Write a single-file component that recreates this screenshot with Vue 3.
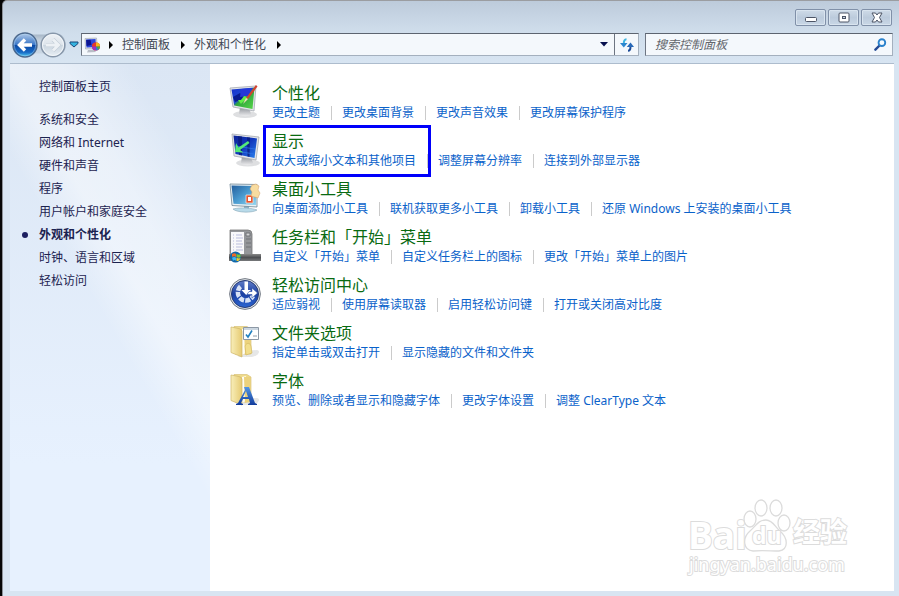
<script setup>
const navLinks = [
  { text: '系统和安全' },
  { text: '网络和 Internet' },
  { text: '硬件和声音' },
  { text: '程序' },
  { text: '用户帐户和家庭安全' },
  { text: '外观和个性化', active: true },
  { text: '时钟、语言和区域' },
  { text: '轻松访问' },
]
const categories = [
  { icon: 'personalize', title: '个性化', links: ['更改主题', '更改桌面背景', '更改声音效果', '更改屏幕保护程序'] },
  { icon: 'display', title: '显示', marked: true, links: ['放大或缩小文本和其他项目', '调整屏幕分辨率', '连接到外部显示器'] },
  { icon: 'gadgets', title: '桌面小工具', links: ['向桌面添加小工具', '联机获取更多小工具', '卸载小工具', '还原 Windows 上安装的桌面小工具'] },
  { icon: 'taskbar', title: '任务栏和「开始」菜单', links: ['自定义「开始」菜单', '自定义任务栏上的图标', '更改「开始」菜单上的图片'] },
  { icon: 'ease', title: '轻松访问中心', links: ['适应弱视', '使用屏幕读取器', '启用轻松访问键', '打开或关闭高对比度'] },
  { icon: 'folder', title: '文件夹选项', links: ['指定单击或双击打开', '显示隐藏的文件和文件夹'] },
  { icon: 'fonts', title: '字体', links: ['预览、删除或者显示和隐藏字体', '更改字体设置', '调整 ClearType 文本'] },
]
</script>

<template>
  <div class="desktop">
    <div class="window">
      <header class="frame-top">
        <div class="captions">
          <button type="button" aria-label="最小化">
            <svg width="12" height="11" viewBox="0 0 12 11"><rect x=".5" y="5.500" width="11" height="4" rx="1" fill="#fff" stroke="#4d5566" /></svg>
          </button>
          <button type="button" aria-label="最大化">
            <svg width="12" height="11" viewBox="0 0 12 11"><rect x="1" y="1" width="10" height="9" rx="1" fill="#fff" stroke="#4d5566" /><rect x="4.500" y="4.500" width="3" height="2" fill="#c8d4e2" stroke="#4d5566" /></svg>
          </button>
          <button type="button" aria-label="关闭">
            <svg width="12" height="11" viewBox="0 0 12 11"><path d="M1 1h3.500L6 3l1.500-2H11L8.500 5.500 11 10H7.500L6 8l-1.500 2H1l2.500-4.500z" fill="#fff" stroke="#4d5566" stroke-linejoin="round" /></svg>
          </button>
        </div>

        <div class="navrow">
          <div class="travel">
            <div class="pair">
              <button type="button" aria-label="后退">
                <svg width="26" height="26" viewBox="0 0 26 26">
                  <defs>
                    <linearGradient id="backBlue" x1="0" y1="0" x2="0" y2="1">
                      <stop offset="0" stop-color="#b4cbe8" /><stop offset=".48" stop-color="#3c78c8" /><stop offset=".52" stop-color="#0c4aa6" /><stop offset=".8" stop-color="#1769c4" /><stop offset="1" stop-color="#4fd0f6" />
                    </linearGradient>
                  </defs>
                  <circle cx="13" cy="13" r="12" fill="url(#backBlue)" stroke="#4b688d" stroke-width="1.300" />
                  <circle cx="13" cy="13" r="10.800" fill="none" stroke="#b6d9f5" stroke-opacity=".45" />
                  <path d="M13 7.500 7.500 13l5.500 5.500M8 13h12" fill="none" stroke="#fff" stroke-width="3.400" />
                </svg>
              </button>
              <button type="button" aria-label="前进">
                <svg width="26" height="26" viewBox="0 0 26 26">
                  <defs>
                    <linearGradient id="forwardGray" x1="0" y1="0" x2="0" y2="1">
                      <stop offset="0" stop-color="#eef2f6" /><stop offset=".5" stop-color="#dde4eb" /><stop offset=".52" stop-color="#cbd6e0" /><stop offset="1" stop-color="#e8eff5" />
                    </linearGradient>
                  </defs>
                  <circle cx="13" cy="13" r="11.800" fill="url(#forwardGray)" stroke="#8797aa" stroke-width="1.500" />
                  <circle cx="13" cy="13" r="10.500" fill="none" stroke="#f2f6fa" />
                  <path d="m13 7.500 5.500 5.500-5.500 5.500M18 13H6" fill="none" stroke="#c0cad5" stroke-width="4" />
                  <path d="m13 7.500 5.500 5.500-5.500 5.500M18 13H6" fill="none" stroke="#edf1f5" stroke-width="3" />
                </svg>
              </button>
            </div>
            <button type="button" class="recent" aria-label="最近的页面">
              <svg width="10" height="7" viewBox="0 0 10 7"><path d="M1 1h8v1.500L5 6 1 2.500z" fill="#35b3df" stroke="#1b4778" stroke-linejoin="round" /></svg>
            </button>
          </div>

          <div class="address">
            <svg class="place" width="17" height="16" viewBox="0 0 17 16">
              <path d="M1 1.500 12.500 1l1 10.500-12 .5z" fill="#d7dbe2" stroke="#9aa3b0" stroke-width=".6" />
              <path d="m2 2.500 9.500-.4.5 8-9.500.5z" fill="#2c46dc" />
              <path d="m2.200 3 4.300-.3 1 5.300-5 1z" fill="#0d1590" />
              <path d="m4 13 6-.5 2 2.500-9 .5z" fill="#b9bec7" />
              <circle cx="12" cy="9.500" r="4" fill="#e43326" /><path d="M12 9.500 8 9a4 4 0 0 1 4-3.500z" fill="#e4382b" /><path d="M12 9.500V5.500a4 4 0 0 1 4 4z" fill="#f3b81c" /><path d="M12 9.500H8a4 4 0 0 0 4 4z" fill="#9a33c0" /><path d="M12 9.500h4a4 4 0 0 1-1.500 3z" fill="#39b54a" /><path d="M12 9.500 14.500 12.500a4 4 0 0 1-2.500 1z" fill="#2a7ddd" />
            </svg>
            <svg class="chev" width="6" height="8" viewBox="0 0 6 8"><path d="M1 0v8l4-4z" /></svg>
            <a href="#">控制面板</a>
            <svg class="chev" width="6" height="8" viewBox="0 0 6 8"><path d="M1 0v8l4-4z" /></svg>
            <a href="#">外观和个性化</a>
            <svg class="chev" width="6" height="8" viewBox="0 0 6 8"><path d="M1 0v8l4-4z" /></svg>
            <button type="button" class="history" aria-label="以前的位置">
              <svg width="8" height="5" viewBox="0 0 8 5"><path d="M0 0h8L4 4.500z" fill="#07104e" /></svg>
            </button>
            <button type="button" class="refresh" aria-label="刷新">
              <svg width="14" height="14" viewBox="0 0 14 14">
                <path d="M6.500 1.200C4.500 1.200 3.800 3 3.800 5.500" fill="none" stroke="#3cb4df" stroke-width="2" /><path d="M0 5h7.500L3.800 9.500z" fill="#2c86cf" />
                <path d="M8 12.800c2 0 2.500-1.500 2.500-4.300" fill="none" stroke="#1c4b97" stroke-width="2" /><path d="M6.800 9H14l-3.500-4.500z" fill="#2869b8" />
              </svg>
            </button>
          </div>

          <div class="search">
            <input type="search" aria-label="搜索控制面板" placeholder="搜索控制面板" />
            <button type="button" aria-label="搜索">
              <svg width="13" height="13" viewBox="0 0 14 14"><path d="m1.500 12.500 4.700-4.700" stroke="#244a94" stroke-width="2.600" stroke-linecap="round" /><circle cx="8.500" cy="5" r="3.600" fill="#f6fbff" stroke="#2b82cc" stroke-width="2" /></svg>
            </button>
          </div>
        </div>
      </header>

      <div class="body">
        <nav class="side">
          <a class="home" href="#">控制面板主页</a>
          <ul>
            <li v-for="item in navLinks" :key="item.text" :class="{ active: item.active }">
              <a href="#">{{ item.text }}</a>
            </li>
          </ul>
        </nav>

        <main class="content">
          <section v-for="cat in categories" :key="cat.title" class="category">
            <svg v-if="cat.icon === 'personalize'" class="icon" viewBox="0 0 32 34">
              <defs>
                <linearGradient id="screenPaint" x1="0" y1="0" x2="1" y2="1"><stop offset="0" stop-color="#1730c8" /><stop offset=".42" stop-color="#1c49d6" /><stop offset=".5" stop-color="#2fa53d" /><stop offset="1" stop-color="#58d84a" /></linearGradient>
                <linearGradient id="standGray" x1="0" y1="0" x2="0" y2="1"><stop offset="0" stop-color="#8b8f96" /><stop offset="1" stop-color="#ececee" /></linearGradient>
              </defs>
              <ellipse cx="16" cy="29.500" rx="12" ry="3.500" fill="#dedfe1" />
              <path d="m11 22 9 1 2 6c-2 3-9 3-12 0z" fill="url(#standGray)" />
              <path d="m1 3 26-2-2 25L4 22z" fill="#e3e5e9" stroke="#a6abb3" stroke-width=".8" />
              <path d="m2.500 4.500 23-2-2 21.500L5.200 20.500z" fill="url(#screenPaint)" />
              <path d="m4 12 7-4 6 5-11 4z" fill="#081b8f" /><path d="m12 4 12-1-5 8-8 1z" fill="#2637d8" />
              <path d="m9 15 3 4c2-3 5-3 6-7l-3-1-3 4z" fill="#62ee4b" />
              <path d="m27 0 1.500 1.500L19 14l-2-1z" fill="#d4412f" /><path d="m17 13 2 1-5 5z" fill="#f6ddbb" />
            </svg>
            <svg v-else-if="cat.icon === 'display'" class="icon" viewBox="0 0 32 34">
              <defs><linearGradient id="screenBlue" x1="0" y1="0" x2="1" y2="1"><stop offset="0" stop-color="#0d2497" /><stop offset=".5" stop-color="#1238bd" /><stop offset="1" stop-color="#2a83ee" /></linearGradient></defs>
              <ellipse cx="19" cy="30" rx="12" ry="3.500" fill="#dedfe1" />
              <path d="m13 23 9 1 2 6c-2 3-9 3-12 0z" fill="url(#standGray)" />
              <path d="m3 1 27 3-3 23-22-4z" fill="#e3e5e9" stroke="#a6abb3" stroke-width=".8" />
              <path d="m4.500 2.500 23.500 3-2.500 19.500L6.500 21z" fill="url(#screenBlue)" />
              <path d="m9 3 4 .5v19l-3-.6zm9 1.200 3 .4-.5 19.400-2-.4z" fill="#07197a" opacity=".75" />
              <path d="m6 13 20 3M7 18l18 3" stroke="#2f72e6" stroke-width=".8" />
              <path d="m19 8 1.500 2-9.500 7 3.500 2.500L6 19l1-9 2.500 4.500z" fill="#55e878" />
            </svg>
            <svg v-else-if="cat.icon === 'gadgets'" class="icon" viewBox="0 0 32 34">
              <defs><linearGradient id="screenSky" x1="0" y1="0" x2="1" y2="1"><stop offset="0" stop-color="#235e9c" /><stop offset=".5" stop-color="#4a9bd0" /><stop offset="1" stop-color="#94d7f0" /></linearGradient></defs>
              <path d="M15 25h5v4h-5z" fill="#8db4c9" /><path d="M4 28c8-2 19-1 24 1-4 3-20 3-24-1z" fill="#b9dbea" stroke="#8aa8b9" stroke-width=".6" />
              <path d="m1 3 27 .5v22.500L3 24.500z" fill="#e9f1f5" stroke="#6d8594" stroke-width=".8" />
              <path d="m2.500 4.500 24.500.5v19L4.500 22.800z" fill="url(#screenSky)" />
              <path d="M17 14h7v8h-7z" fill="#e8552e" stroke="#f5ece4" stroke-width=".7" /><path d="M19 16h3v4h-3z" fill="#fff" />
              <path d="m23 4 4-1 3 2-1 4 2 3-2 5-7-2 1-4-2-3z" fill="#f8dca0" stroke="#d59b63" stroke-width=".5" />
            </svg>
            <svg v-else-if="cat.icon === 'taskbar'" class="icon" viewBox="0 0 32 34">
              <defs><linearGradient id="barGray" x1="0" y1="0" x2="0" y2="1"><stop offset="0" stop-color="#888" /><stop offset=".5" stop-color="#4e5053" /><stop offset="1" stop-color="#77797b" /></linearGradient></defs>
              <path d="M1 1h18q4 0 4 4v21H1z" fill="#94969a" stroke="#777" stroke-width=".8" />
              <path d="M2 3h13v22H2z" fill="#f8f8fa" /><path d="M4 6h1m2 0h6M4 9h1m2 0h7M4 12h1m2 0h6M4 15h1m2 0h7M4 18h1m2 0h6M4 21h1m2 0h7" stroke="#b9bcdc" />
              <path d="M17 4h4v3h-4zm0 6h5m-5 4h5m-5 4h5" fill="#d2d3d5" stroke="#707377" />
              <path d="M0 25h32v7H0z" fill="url(#barGray)" />
              <circle cx="6.500" cy="28" r="5.500" fill="#1267a8" /><path d="M3 25c2-1 3-1 4 0v3c-1-1-3-1-4 0z" fill="#ef6a28" /><path d="M7.500 25c2 1 3 1 4 0v3c-1 1-3 1-4 0z" fill="#84c52d" /><path d="M3 28.700c2-1 3-1 4 0v3c-1-1-2-1-3 0z" fill="#40b8ef" /><path d="M7.500 28.700c2 1 3 1 4 0-.5 2-2 4-4 3z" fill="#f8cd2b" />
            </svg>
            <svg v-else-if="cat.icon === 'ease'" class="icon" viewBox="0 0 32 34">
              <defs><linearGradient id="easeBlue" x1="0" y1="0" x2="0" y2="1"><stop offset="0" stop-color="#5f7cc8" /><stop offset=".5" stop-color="#1b40a2" /><stop offset="1" stop-color="#2c66d2" /></linearGradient></defs>
              <circle cx="16" cy="17" r="15.400" fill="#dfe3e8" stroke="#747b85" /><circle cx="16" cy="17" r="13.500" fill="url(#easeBlue)" stroke="#263a75" />
              <path d="M11.500 9.500A8 8 0 1 0 24 19" fill="none" stroke="#d9e3f6" stroke-width="4.500" stroke-dasharray="5 1.200" />
              <path d="M15.500 4.500h3.500v8.500h3l-4.800 5-4.700-5h3z" fill="#fff" />
              <path d="M20 14.500h3v-3.500l5.500 5-5.500 5v-3.500h-5z" fill="#fff" stroke="#2048a5" stroke-width=".5" />
            </svg>
            <svg v-else class="icon" viewBox="0 0 32 34">
              <defs>
                <linearGradient id="folderGold"><stop offset="0" stop-color="#f8eeb9" /><stop offset="1" stop-color="#e6ca72" /></linearGradient>
                <linearGradient id="letterBlue" x1="0" y1="0" x2="0" y2="1"><stop offset="0" stop-color="#5296e5" /><stop offset="1" stop-color="#123c9c" /></linearGradient>
              </defs>
              <path d="m14 26 14-1c4 1 2 5-5 7H9z" fill="#dcdddd" opacity=".7" />
              <path d="M5 1.500h13l4 2.500v25H6z" fill="#efdb8b" stroke="#d3ba6b" stroke-width=".6" />
              <path d="m13 4 4-1v25l-4 2z" fill="#fffdf3" />
              <path d="m15 4 6-.5v25l-5 1.500z" fill="#ecd27c" />
              <path d="M2 2 10 3.500q3 .5 3 3V32L2 27.500z" fill="url(#folderGold)" stroke="#cfb669" stroke-width=".7" />
              <template v-if="cat.icon === 'folder'">
                <path d="M16 21c2-4 5-3 6 0l1 7-6 2z" fill="#f2de8b" stroke="#cfb35c" stroke-width=".6" />
                <path d="M14.500 2.500h15v12h-15z" fill="#fff" stroke="#8c98a5" /><path d="M15 3h14v2H15z" fill="#ccd7e1" /><path d="m17 9.500 2 2.500 4-6.500" fill="none" stroke="#2381bf" stroke-width="1.600" /><path d="M24 11h4" stroke="#8c9ca8" />
              </template>
              <path v-else fill-rule="evenodd" d="M15 14h5l6 16 2 1v1h-9v-1l2-1-1-4h-6l-2 4 2 1v1H7v-1l2-1 7-13zm2 4-3 6h5z" fill="url(#letterBlue)" />
            </svg>

            <div class="info" :class="{ marked: cat.marked }">
              <h2><a href="#">{{ cat.title }}</a></h2>
              <ul class="tasks">
                <li v-for="link in cat.links" :key="link"><a href="#">{{ link }}</a></li>
              </ul>
            </div>
          </section>
        </main>
      </div>

      <svg class="watermark" width="166" height="86" viewBox="0 0 166 86" role="img" aria-label="Baidu 经验">
        <g fill="#fff" stroke="#dcdcdc" stroke-width="1.300">
          <text class="brand" x="3" y="57">Bai</text>
          <ellipse cx="65" cy="27" rx="6" ry="8" /><ellipse cx="76" cy="16" rx="6" ry="8" /><ellipse cx="91" cy="16" rx="6" ry="8" /><ellipse cx="99" cy="31" rx="6" ry="8" />
          <path d="M81 28c7 0 9 7 14 11 8 7 9 18-1 20-8 0-17-1-26 0-10-1-11-13-3-20 6-5 8-11 16-11z" />
          <text class="du" x="67" y="52">du</text>
          <text class="jy" x="108" y="50">经验</text>
          <text class="url" x="4" y="79">jingyan.baidu.com</text>
        </g>
      </svg>
    </div>
  </div>
</template>

<style>
body {
  margin: 0;
}
</style>

<style scoped>
.desktop {
  display: flex;
  min-height: 100vh;
  box-sizing: border-box;
  padding-left: 2px;
  background: #050505;
  font: 12px/18px "Noto Sans", "Noto Sans CJK SC", sans-serif;
  color: #1c2350;
}
.window {
  position: relative;
  flex: 1;
  display: flex;
  flex-direction: column;
  box-sizing: border-box;
  padding: 0 5px 5px 7px;
  border-left: 1px solid #8d9299;
  border-top: 1px solid #9b9da1;
  border-radius: 5px 0 0 0;
  background: linear-gradient(#bdcbdb 0, #d0deec 32px, #d8e5f2 64px);
}
a {
  color: inherit;
  text-decoration: none;
}
ul {
  list-style: none;
  margin: 0;
  padding: 0;
}
button {
  display: flex;
  align-items: center;
  justify-content: center;
  padding: 0;
  border: 0;
  background: none;
}
.frame-top {
  padding-top: 8px;
}
.captions {
  display: flex;
  justify-content: flex-end;
  gap: 2px;
  padding-right: 2px;
}
.captions button {
  width: 31px;
  height: 17px;
  border: 1px solid #8090a8;
  border-radius: 2px;
  background: linear-gradient(#cfdbe8, #bccbdc 50%, #c9d7e6);
  box-shadow: inset 0 0 0 1px #d9e4ef;
}
.navrow {
  display: flex;
  align-items: center;
  height: 37px;
  padding: 0 1px 0 2px;
}
.travel {
  display: flex;
  align-items: center;
  gap: 2px;
  width: 69px;
}
.pair {
  display: flex;
  gap: 2px;
  border-radius: 13px;
  background: linear-gradient(#fff0 2px, #a9b9c9 3px, #c3d0dd 8px, #c9d6e3 21px, #fff0 22px);
}
.travel .recent {
  width: 11px;
  height: 20px;
}
.address,
.search {
  display: flex;
  align-items: center;
  box-sizing: border-box;
  height: 23px;
  border: 1px solid #a4b0be;
  border-top-color: #5c6470;
  border-left-color: #6d7582;
  background: #f4f8fc;
}
.address {
  flex: 1;
  margin-right: 6px;
  color: #3f4754;
}
.place {
  margin: 0 7px 0 2px;
}
.chev {
  margin-right: 8px;
  fill: #000;
}
.address a {
  margin-right: 10px;
}
.history {
  width: 20px;
  height: 21px;
  margin-left: auto;
}
.refresh {
  width: 24px;
  height: 21px;
  border-left: 1px solid #6d7582;
}
.search {
  width: 248px;
}
.search input {
  flex: 1;
  min-width: 0;
  height: 21px;
  padding: 0 9px;
  border: 0;
  outline: 0;
  background: none;
  font: inherit;
  font-style: italic;
}
.search input::placeholder {
  color: #62666c;
  opacity: 1;
}
.search button {
  width: 24px;
}
.body {
  flex: 1;
  display: flex;
  border-top: 1px solid #adbccd;
  background: #fff;
}
.side {
  box-sizing: border-box;
  width: 200px;
  padding: 11px 0 0 29px;
  background:
    linear-gradient(60deg, #fff0 50%, #ffffff70 60%, #ffffff60 70%, #fff0 84%),
    linear-gradient(#dbe6f4, #e7f1fe 400px);
}
.side a {
  display: block;
  line-height: 23px;
}
.side .home {
  margin-bottom: 10px;
}
.side li {
  position: relative;
}
.active {
  font-weight: 700;
}
.active::before {
  content: "";
  position: absolute;
  left: -17px;
  top: 9px;
  width: 6px;
  height: 6px;
  border-radius: 50%;
  background: #1c1f60;
}
.content {
  flex: 1;
  padding: 19px;
}
.category {
  display: flex;
  gap: 11px;
  height: 48px;
}
.icon {
  flex: none;
  width: 32px;
  height: 34px;
  margin-top: 2px;
}
.info {
  position: relative;
}
.info h2 {
  margin: 0;
  font-size: 16px;
  font-weight: 400;
  line-height: 20px;
  color: #096a11;
}
.marked::after {
  content: "";
  position: absolute;
  left: -9px;
  top: -6px;
  width: 162px;
  height: 46px;
  border: 3px solid #0000fb;
}
.tasks {
  display: flex;
  line-height: 20px;
  color: #0a62ca;
  white-space: nowrap;
}
.tasks li {
  display: flex;
  align-items: center;
}
.tasks li + li::before {
  content: "";
  width: 1px;
  height: 14px;
  margin: 0 10px 0 11px;
  background: #cbcbcb;
}
.watermark {
  position: absolute;
  right: 48px;
  bottom: 18px;
  pointer-events: none;
}
.watermark text {
  paint-order: stroke;
  stroke-width: 2px;
}
.brand,
.du {
  font: 700 37px "Open Sans", sans-serif;
}
.du {
  font-size: 23px;
}
.jy {
  font: 700 27px "Noto Sans CJK SC", sans-serif;
}
.url {
  font: 18px "Noto Sans", sans-serif;
}
</style>
